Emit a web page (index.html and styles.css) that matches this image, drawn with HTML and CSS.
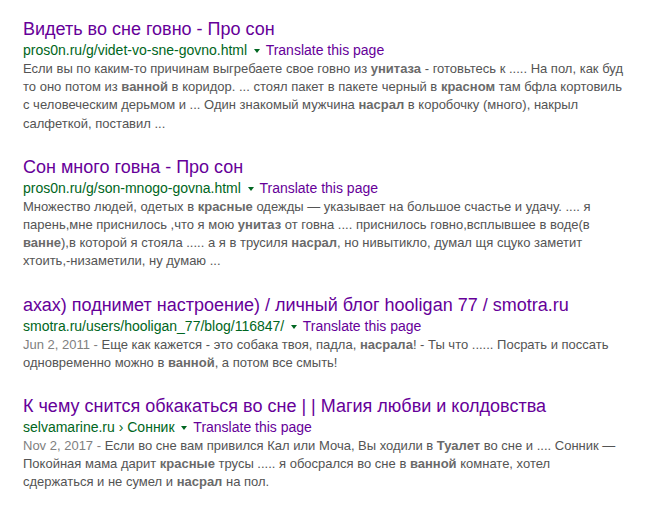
FILE: index.html
```html
<!DOCTYPE html>
<html lang="ru">
<head>
  <meta charset="UTF-8">
  <title>Результаты поиска</title>
  <link rel="stylesheet" href="styles.css">
</head>
<body>
  <div class="results">

    <div class="g">
      <a class="title" href="#">Видеть во сне говно - Про сон</a>
      <div class="url-line">
        <cite>pros0n.ru/g/videt-vo-sne-govno.html</cite>
        <span class="arrow"></span>
        <a class="translate" href="#">Translate this page</a>
      </div>
      <div class="snippet">
        Если вы по каким-то причинам выгребаете свое говно из <b>унитаза</b> - готовьтесь к ..... На пол, как буд<br>
        то оно потом из <b>ванной</b> в коридор. ... стоял пакет в пакете черный в <b>красном</b> там бфла кортовиль<br>
        с человеческим дерьмом и ... Один знакомый мужчина <b>насрал</b> в коробочку (много), накрыл<br>
        салфеткой, поставил ...
      </div>
    </div>

    <div class="g">
      <a class="title" href="#">Сон много говна - Про сон</a>
      <div class="url-line">
        <cite>pros0n.ru/g/son-mnogo-govna.html</cite>
        <span class="arrow"></span>
        <a class="translate" href="#">Translate this page</a>
      </div>
      <div class="snippet">
        Множество людей, одетых в <b>красные</b> одежды — указывает на большое счастье и удачу. .... я<br>
        парень,мне приснилось ,что я мою <b>унитаз</b> от говна .... приснилось говно,всплывшее в воде(в<br>
        <b>ванне</b>),в которой я стояла ..... а я в трусиля <b>насрал</b>, но нивытикло, думал щя сцуко заметит<br>
        хтоить,-низаметили, ну думаю ...
      </div>
    </div>

    <div class="g">
      <a class="title" href="#">ахах) поднимет настроение) / личный блог hooligan 77 / smotra.ru</a>
      <div class="url-line">
        <cite>smotra.ru/users/hooligan_77/blog/116847/</cite>
        <span class="arrow"></span>
        <a class="translate" href="#">Translate this page</a>
      </div>
      <div class="snippet">
        <span class="date">Jun 2, 2011 - </span>Еще как кажется - это собака твоя, падла, <b>насрала</b>! - Ты что ...... Посрать и поссать<br>
        одновременно можно в <b>ванной</b>, а потом все смыть!
      </div>
    </div>

    <div class="g">
      <a class="title" href="#">К чему снится обкакаться во сне | | Магия любви и колдовства</a>
      <div class="url-line">
        <cite>selvamarine.ru › Сонник</cite>
        <span class="arrow"></span>
        <a class="translate" href="#">Translate this page</a>
      </div>
      <div class="snippet">
        <span class="date">Nov 2, 2017 - </span>Если во сне вам привился Кал или Моча, Вы ходили в <b>Туалет</b> во сне и .... Сонник —<br>
        Покойная мама дарит <b>красные</b> трусы ..... я обосрался во сне в <b>ванной</b> комнате, хотел<br>
        сдержаться и не сумел и <b>насрал</b> на пол.
      </div>
    </div>

  </div>
</body>
</html>
```

FILE: styles.css
```css
body {
  margin: 0;
  background: #fff;
  font-family: "Liberation Sans", Arial, sans-serif;
}
.results {
  padding: 18px 0 0 23px;
}
.g {
  margin-bottom: 23px;
}
.title {
  display: block;
  font-size: 18px;
  line-height: 22px;
  color: #660099;
  text-decoration: none;
  white-space: nowrap;
}
.url-line {
  font-size: 14px;
  line-height: 20px;
  white-space: nowrap;
}
cite {
  font-style: normal;
  color: #006621;
}
.arrow {
  display: inline-block;
  width: 0;
  height: 0;
  margin: 0 2px 0 3px;
  border-left: 3px solid transparent;
  border-right: 3px solid transparent;
  border-top: 4px solid #006621;
  vertical-align: middle;
}
.translate {
  color: #660099;
  text-decoration: none;
}
.snippet {
  font-size: 13px;
  line-height: 18.2px;
  color: #545454;
  white-space: nowrap;
}
.snippet b {
  color: #6a6a6a;
}
.date {
  color: #808080;
}
```
